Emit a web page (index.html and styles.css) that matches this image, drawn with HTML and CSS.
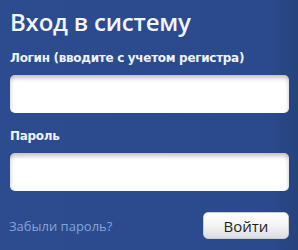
FILE: index.html
```html
<!DOCTYPE html>
<html lang="ru">
<head>
    <meta charset="UTF-8">
    <meta name="viewport" content="width=device-width, initial-scale=1.0">
    <title>Вход в систему</title>
    <link rel="stylesheet" href="styles.css">
</head>
<body>
    <div class="login-box">
        <h1>Вход в систему</h1>

        <label class="field-label" for="login">Логин (вводите с учетом регистра)</label>
        <input class="field-input" type="text" id="login">

        <label class="field-label" for="password">Пароль</label>
        <input class="field-input" type="password" id="password">

        <div class="actions">
            <a class="forgot" href="#">Забыли пароль?</a>
            <button class="submit" type="button">Войти</button>
        </div>
    </div>
</body>
</html>
```

FILE: styles.css
```css
html, body {
    margin: 0;
    padding: 0;
    height: 100%;
}

body {
    background: #2c4b8f;
    background-image: linear-gradient(90deg, #2d4c90 0%, #2b4a8e 90%, #26437f 100%);
    font-family: "DejaVu Sans", Verdana, sans-serif;
}

.login-box {
    padding: 5px 9px 0 10px;
}

h1 {
    margin: 0;
    font-family: "Open Sans", sans-serif;
    font-weight: 600;
    font-size: 24px;
    line-height: 34px;
    color: #f2f5fb;
    letter-spacing: -0.2px;
}

.field-label {
    display: block;
    margin-top: 12px;
    font-size: 12px;
    font-weight: bold;
    line-height: 14px;
    color: #eef2f9;
    letter-spacing: -0.3px;
}

.field-input {
    display: block;
    box-sizing: border-box;
    width: 279px;
    height: 38px;
    margin-top: 10px;
    border: none;
    border-radius: 5px;
    background: #fff;
    box-shadow: inset 0 3px 4px rgba(0, 0, 0, 0.25);
    outline: none;
}

.field-input + .field-label {
    margin-top: 16px;
}

.actions {
    display: flex;
    justify-content: space-between;
    align-items: center;
    margin-top: 21px;
}

.forgot {
    font-family: "Open Sans", sans-serif;
    font-size: 13px;
    color: #86a3d9;
    text-decoration: none;
    margin-left: -1px;
}

.submit {
    width: 86px;
    height: 27px;
    border: 1px solid #c9ccd2;
    border-radius: 5px;
    background: linear-gradient(#ffffff 0%, #f4f4f4 50%, #dcdde0 100%);
    font-family: "Open Sans", sans-serif;
    font-size: 15px;
    color: #1e1e1e;
    padding: 0;
}
```
